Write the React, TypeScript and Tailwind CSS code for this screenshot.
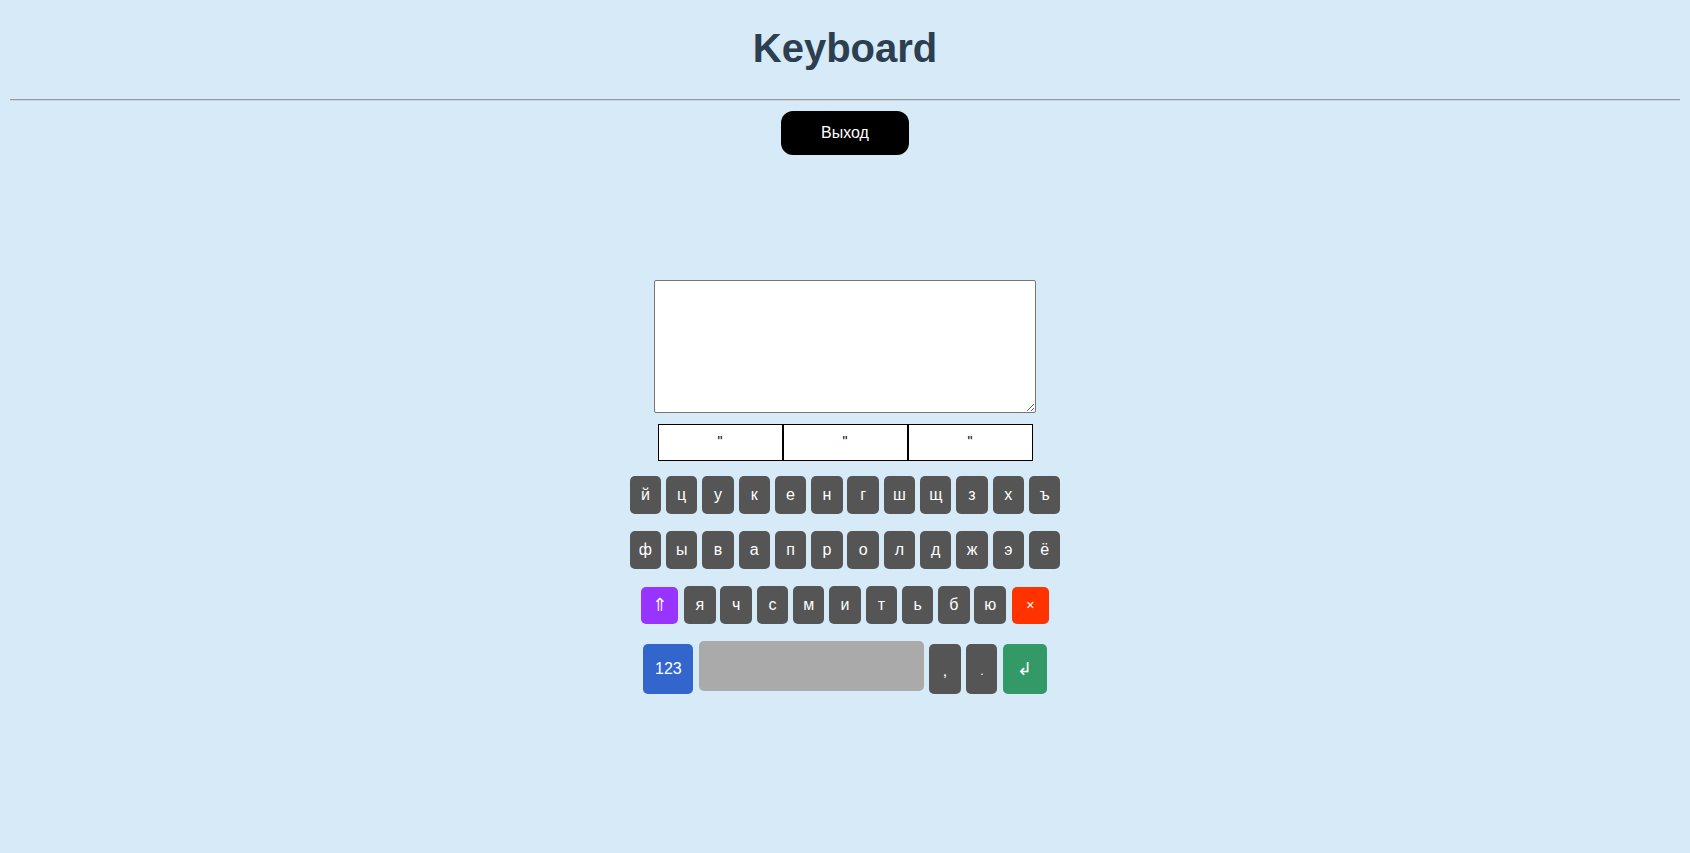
const row1 = ["й", "ц", "у", "к", "е", "н", "г", "ш", "щ", "з", "х", "ъ"];
const row2 = ["ф", "ы", "в", "а", "п", "р", "о", "л", "д", "ж", "э", "ё"];
const row3 = ["я", "ч", "с", "м", "и", "т", "ь", "б", "ю"];

function Key({ label }: { label: string }) {
  return (
    <button className="w-[31.5px] h-[38px] rounded-[5px] bg-[#555555] text-white text-[16px] flex items-center justify-center">
      {label}
    </button>
  );
}

export default function App() {
  return (
    <div
      className="min-h-screen bg-[#d6eaf8] px-[10px] flex flex-col items-center"
      style={{ fontFamily: '"Liberation Sans", Arial, "DejaVu Sans", sans-serif' }}
    >
      {/* Header */}
      <h1 className="mt-[25px] text-[40px] leading-[46px] font-bold text-[#2c3e50]">Keyboard</h1>
      <div className="mt-[28px] w-full h-[2px] border-t border-b border-t-[#9a9a9a] border-b-[#c9d6df]" />
      <button className="mt-[10px] w-[128px] h-[44px] rounded-[12px] bg-black text-white text-[16px]">
        Выход
      </button>

      {/* Input */}
      <textarea className="mt-[125px] w-[382px] h-[133px] bg-white border border-[#767676] rounded-[2px] outline-none" />

      <div className="mt-[11px] flex">
        {[0, 1, 2].map((i) => (
          <div
            key={i}
            className="w-[125px] h-[37px] bg-white border border-black text-center text-[14px] leading-[14px] pt-[9px] text-black"
          >
            "
          </div>
        ))}
      </div>

      {/* Keyboard */}
      <div className="mt-[15px] flex gap-[4.8px]">
        {row1.map((k) => (
          <Key key={k} label={k} />
        ))}
      </div>
      <div className="mt-[17px] flex gap-[4.8px]">
        {row2.map((k) => (
          <Key key={k} label={k} />
        ))}
      </div>
      <div className="mt-[17px] flex items-center gap-[4.8px]">
        <button className="mr-[1.2px] w-[37px] h-[37px] rounded-[5px] bg-[#9933ff] text-white text-[18px] flex items-center justify-center">
          ⇑
        </button>
        {row3.map((k) => (
          <Key key={k} label={k} />
        ))}
        <button className="ml-[1.2px] w-[37px] h-[37px] rounded-[5px] bg-[#ff3300] text-white text-[14px] flex items-center justify-center">
          ×
        </button>
      </div>
      <div className="mt-[17px] flex items-end gap-[5.3px]">
        <button className="w-[50px] h-[50px] rounded-[5px] bg-[#3366cc] text-white text-[16px] flex items-center justify-center">
          123
        </button>
        <button className="mb-[3px] w-[225px] h-[50px] rounded-[5px] bg-[#aaaaaa]" />
        <button className="w-[32px] h-[50px] rounded-[5px] bg-[#555555] text-white text-[16px] flex items-center justify-center pt-[4px]">
          ,
        </button>
        <button className="w-[31px] h-[50px] rounded-[5px] bg-[#555555] text-white text-[12px] flex items-center justify-center pt-[4px]">
          .
        </button>
        <button className="w-[44px] h-[50px] rounded-[5px] bg-[#339966] text-white text-[18px] font-light flex items-center justify-center">
          ↲
        </button>
      </div>
    </div>
  );
}
